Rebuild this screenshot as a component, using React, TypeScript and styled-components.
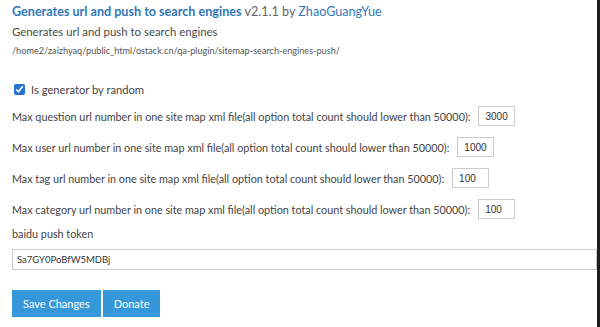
import React from "react";
import styled, { createGlobalStyle } from "styled-components";

const GlobalStyle = createGlobalStyle`
  body {
    margin: 0;
    background: #fff;
    font-family: Lato, "Open Sans", sans-serif;
  }
`;

const Page = styled.div`
  width: 600px;
  height: 327px;
  box-sizing: border-box;
  border-right: 3px solid #1e1e1e;
  padding: 2px 0 0 12px;
  overflow: hidden;
  color: #4a4a4a;
`;

const Header = styled.div`
  font-size: 12.6px;
  line-height: 20px;
  color: #666;
`;

const PluginName = styled.span`
  color: #3177b8;
  font-weight: 700;
`;

const Author = styled.span`
  color: #3177b8;
`;

const Description = styled.div`
  font-size: 11.4px;
  line-height: 20px;
  color: #4a4a4a;
`;

const Path = styled.div`
  font-size: 9.15px;
  line-height: 18px;
  color: #555;
`;

const Form = styled.form`
  display: flex;
  flex-direction: column;
  margin-top: 21px;
  font-size: 10.8px;
  color: #444;
`;

const CheckRow = styled.label`
  display: flex;
  align-items: center;
  gap: 6px;
  height: 16px;
  padding-left: 2px;
  font-size: 11.2px;
`;

const Check = styled.input`
  margin: 0;
  width: 11px;
  height: 11px;
  accent-color: #2271d1;
`;

const FieldRow = styled.div<{ $gap?: number }>`
  display: flex;
  align-items: center;
  gap: 8px;
  height: 20px;
  margin-top: ${(p) => p.$gap ?? 11}px;
`;

const SmallInput = styled.input`
  box-sizing: border-box;
  width: 37px;
  height: 20px;
  padding: 0 6px;
  border: 1px solid #ccc;
  font-family: "Liberation Sans", sans-serif;
  font-size: 10px;
  color: #333;
  outline: none;
`;

const TokenLabel = styled.div`
  margin-top: 7px;
  line-height: 16px;
`;

const TokenInput = styled.input`
  box-sizing: border-box;
  width: 585px;
  height: 21px;
  margin-top: 7px;
  padding: 0 4px;
  border: 1px solid #ccc;
  font-family: Lato, sans-serif;
  font-size: 9.5px;
  color: #333;
  outline: none;
`;

const ButtonRow = styled.div`
  display: flex;
  gap: 2px;
  margin-top: 20px;
`;

const Button = styled.button`
  height: 27px;
  padding: 0 11px;
  border: none;
  background: #3498db;
  color: #fff;
  font-family: Lato, sans-serif;
  font-size: 11px;
  cursor: pointer;
`;

const fields = [
  { label: "Max question url number in one site map xml file(all option total count should lower than 50000):", value: "3000", gap: 9 },
  { label: "Max user url number in one site map xml file(all option total count should lower than 50000):", value: "1000" },
  { label: "Max tag url number in one site map xml file(all option total count should lower than 50000):", value: "100" },
  { label: "Max category url number in one site map xml file(all option total count should lower than 50000):", value: "100" },
];

const App = () => {
  return (
    <>
      <GlobalStyle />
      <Page>
        <Header>
          <PluginName>Generates url and push to search engines</PluginName> v2.1.1 by{" "}
          <Author>ZhaoGuangYue</Author>
        </Header>
        <Description>Generates url and push to search engines</Description>
        <Path>/home2/zaizhyaq/public_html/ostack.cn/qa-plugin/sitemap-search-engines-push/</Path>

        <Form onSubmit={(e) => e.preventDefault()}>
          <CheckRow>
            <Check type="checkbox" defaultChecked />
            Is generator by random
          </CheckRow>

          {fields.map((f) => (
            <FieldRow key={f.label} $gap={f.gap}>
              <span>{f.label}</span>
              <SmallInput defaultValue={f.value} />
            </FieldRow>
          ))}

          <TokenLabel>baidu push token</TokenLabel>
          <TokenInput defaultValue="Sa7GY0PoBfW5MDBj" />

          <ButtonRow>
            <Button type="submit">Save Changes</Button>
            <Button type="button">Donate</Button>
          </ButtonRow>
        </Form>
      </Page>
    </>
  );
};

export default App;
